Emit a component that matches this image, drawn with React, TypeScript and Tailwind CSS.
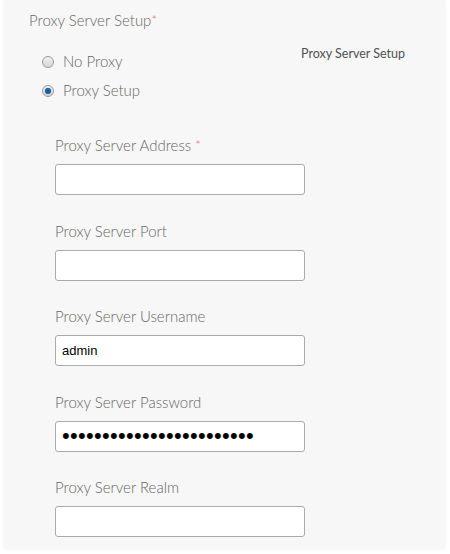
import React from 'react';

const font = { fontFamily: 'Lato, "Open Sans", sans-serif' };

const fields = [
  { label: 'Proxy Server Address', required: true, value: '', secret: false },
  { label: 'Proxy Server Port', value: '', secret: false },
  { label: 'Proxy Server Username', value: 'admin', secret: false },
  { label: 'Proxy Server Password', value: '••••••••••••••••••••••••', secret: true },
  { label: 'Proxy Server Realm', value: '', secret: false },
];

const Radio: React.FC<{ checked?: boolean; label: string }> = ({ checked, label }) => (
  <label className="flex items-center h-[29px]">
    <span className="w-[12px] h-[12px] rounded-full border border-[#9a9a9a] bg-gradient-to-b from-[#f2f2f2] to-[#d6d6d6] flex items-center justify-center">
      {checked && <span className="w-[6px] h-[6px] rounded-full bg-[#1f5f9e] shadow-[0_0_1px_#4da3e8]" />}
    </span>
    <span className="ml-[9px] text-[15px] font-light text-[#666]">{label}</span>
  </label>
);

export default function App() {
  return (
    <div className="w-[450px] h-[554px] bg-white" style={font}>
      <div className="ml-[4px] w-[441px] h-[548px] bg-[#f7f7f7] shadow-[0_1px_4px_rgba(0,0,0,0.06)]">
        <div className="pt-[10px] pl-[25px] text-[15px] leading-[20px] font-light text-[#666]">
          Proxy Server Setup<span className="text-[#f06a6a] align-top text-[13px]">*</span>
        </div>

        <div className="flex mt-[17px]">
          <div className="pl-[38px] w-[297px]">
            <Radio label="No Proxy" />
            <Radio checked label="Proxy Setup" />
          </div>
          <div className="-mt-[2px] text-[12.5px] text-[#505050]">Proxy Server Setup</div>
        </div>

        <div className="pl-[51px] mt-[30px] flex flex-col gap-[25.5px]">
          {fields.map((f) => (
            <div key={f.label} className="flex flex-col">
              <div className="text-[15px] leading-[20px] font-light text-[#666]">
                {f.label}
                {f.required && <span className="text-[#f06a6a] ml-[4px] align-top text-[13px]">*</span>}
              </div>
              <div
                className="mt-[9px] w-[250px] h-[31px] bg-white border border-[#aaa] rounded-[3px] flex items-center pl-[6px] text-black overflow-hidden"
                style={{ fontFamily: '"Liberation Sans", Arial, sans-serif' }}
              >
                {f.secret ? (
                  <span className="text-[22px] tracking-[0.3px] leading-none">{f.value}</span>
                ) : (
                  <span className="text-[13px]">{f.value}</span>
                )}
              </div>
            </div>
          ))}
        </div>
      </div>
    </div>
  );
}
